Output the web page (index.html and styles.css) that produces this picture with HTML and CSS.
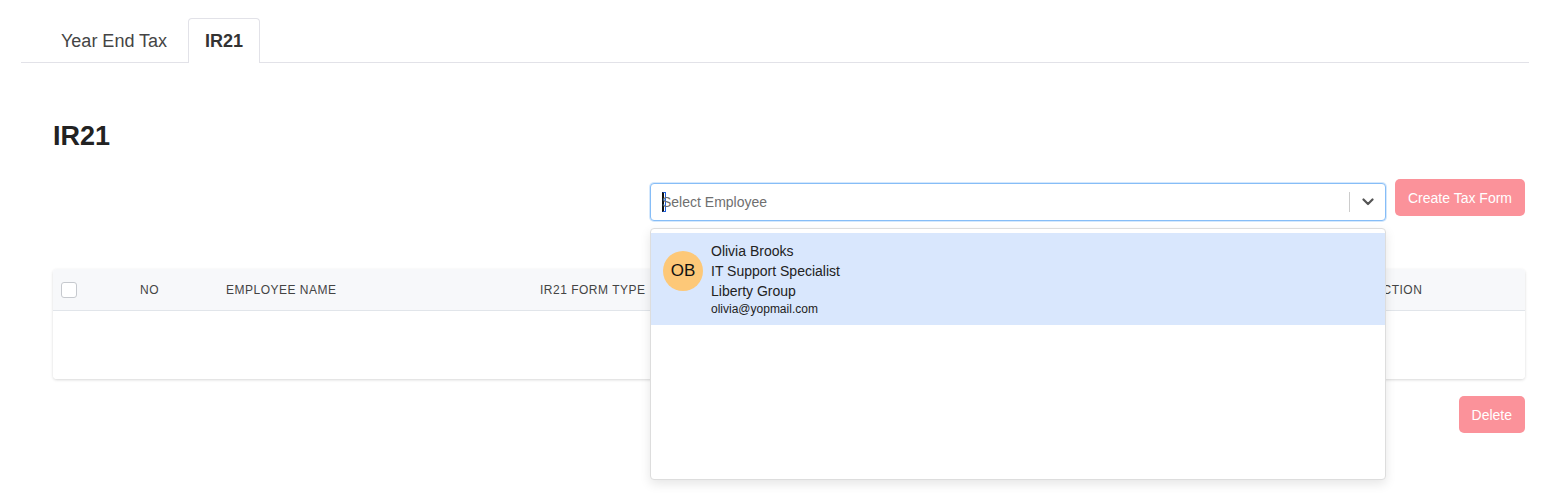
FILE: index.html
```html
<!DOCTYPE html>
<html>
<head>
<meta charset="utf-8">
<link rel="stylesheet" href="styles.css">
</head>
<body>
<div class="tabs">
  <div class="tab">Year End Tax</div>
  <div class="tab active">IR21</div>
</div>
<main class="content">
  <h1 class="title">IR21</h1>
  <div class="toolbar">
    <div class="select-wrap">
      <div class="select">
        <span class="caret"></span>
        <span class="placeholder">Select Employee</span>
        <span class="sep"></span>
        <svg class="chev" width="12" height="8" viewBox="0 0 12 8"><path d="M1.5 1.5 L6 6 L10.5 1.5" fill="none" stroke="#555" stroke-width="2.2" stroke-linecap="round" stroke-linejoin="round"/></svg>
      </div>
      <div class="menu">
        <div class="option">
          <div class="avatar">OB</div>
          <div class="info">
            <div class="line">Olivia Brooks</div>
            <div class="line">IT Support Specialist</div>
            <div class="line">Liberty Group</div>
            <div class="email">olivia@yopmail.com</div>
          </div>
        </div>
      </div>
    </div>
    <button class="btn">Create Tax Form</button>
  </div>
  <div class="table">
    <div class="thead">
      <div class="cell"><span class="checkbox"></span></div>
      <div class="cell">NO</div>
      <div class="cell">EMPLOYEE NAME</div>
      <div class="cell">IR21 FORM TYPE</div>
      <div class="cell">STATUS</div>
      <div class="cell">ACTION</div>
    </div>
    <div class="tbody"></div>
  </div>
  <div class="footer">
    <button class="btn">Delete</button>
  </div>
</main>
</body>
</html>
```
FILE: styles.css
```css
* { box-sizing: border-box; }
html { height: 100%; }
body {
  margin: 0;
  height: 100%;
  padding-top: 18px;
  overflow: hidden;
  font-family: "Liberation Sans", Arial, Helvetica, sans-serif;
  color: #222;
  background: #fff;
}
.tabs {
  display: flex;
  margin: 0 31px 0 21px;
  padding-left: 22px;
  border-bottom: 1px solid #e2e2e8;
  height: 45px;
}
.tab {
  padding: 0 17px;
  height: 44px;
  line-height: 44px;
  font-size: 18px;
  color: #444;
  border: 1px solid transparent;
  border-bottom: none;
  border-radius: 4px 4px 0 0;
  margin-right: 3px;
}
.tab.active {
  font-weight: bold;
  color: #333;
  border-color: #e2e2e8;
  background: #fff;
  height: 45px;
  margin-bottom: -1px;
  padding: 0 16px;
}
.content {
  padding: 0 35px 0 53px;
}
.title {
  margin: 57px 0 0;
  font-size: 27px;
  line-height: 32px;
  font-weight: bold;
  color: #222;
}
.toolbar {
  display: flex;
  justify-content: flex-end;
  align-items: flex-start;
  gap: 9px;
  margin-top: 27px;
}
.select-wrap {
  position: relative;
  width: 736px;
  margin-top: 4px;
}
.select {
  display: flex;
  align-items: center;
  height: 38px;
  border: 1px solid #86bdf7;
  border-radius: 4px;
  box-shadow: 0 0 0 1px rgba(134, 189, 247, 0.35);
  padding-left: 11px;
  background: #fff;
}
.caret {
  width: 4px;
  height: 20px;
  border: 1px solid #1d5fe0;
  border-left: 2px solid #111;
  flex: none;
  margin-right: -4px;
}
.placeholder {
  font-size: 14px;
  color: #6f6f6f;
  flex: 1;
}
.sep {
  width: 1px;
  height: 20px;
  background: #ccc;
}
.chev {
  margin: 0 11px 0 12px;
}
.menu {
  position: absolute;
  top: 45px;
  left: 0;
  right: 0;
  height: 252px;
  background: #fff;
  border: 1px solid #ddd;
  border-radius: 4px;
  box-shadow: 0 4px 11px rgba(0, 0, 0, 0.1);
  padding-top: 4px;
  z-index: 5;
}
.option {
  display: flex;
  align-items: flex-start;
  background: #d9e7fd;
  padding: 8px 12px;
  gap: 8px;
}
.avatar {
  width: 40px;
  height: 40px;
  border-radius: 50%;
  background: #fdc878;
  color: #111;
  font-size: 17px;
  display: flex;
  align-items: center;
  justify-content: center;
  margin-top: 10px;
  flex: none;
}
.line {
  font-size: 14px;
  line-height: 20px;
  color: #222;
}
.email {
  font-size: 12px;
  line-height: 16px;
  color: #222;
}
.btn {
  background: #fb929a;
  color: #fff;
  border: none;
  border-radius: 5px;
  font-family: inherit;
  font-size: 14px;
  height: 37px;
  padding: 0 13px;
}
.table {
  margin-top: 48px;
  border-radius: 4px;
  box-shadow: 0 1px 3px rgba(0, 0, 0, 0.16);
  overflow: hidden;
}
.thead {
  display: grid;
  grid-template-columns: 87px 86px 314px 834px 1fr;
  height: 42px;
  align-items: center;
  background: #f7f8fa;
  border-bottom: 1px solid #e1e5ea;
  font-size: 12px;
  letter-spacing: 0.5px;
  color: #444;
}
.thead .cell:first-child { padding-left: 8px; display: flex; }
.thead .cell:nth-child(5) { display: none; }
.checkbox {
  width: 16px;
  height: 16px;
  border: 1px solid #c6c9ce;
  border-radius: 3px;
  background: #fff;
}
.tbody {
  height: 68px;
  background: #fff;
}
.footer {
  display: flex;
  justify-content: flex-end;
  margin-top: 17px;
}
```
